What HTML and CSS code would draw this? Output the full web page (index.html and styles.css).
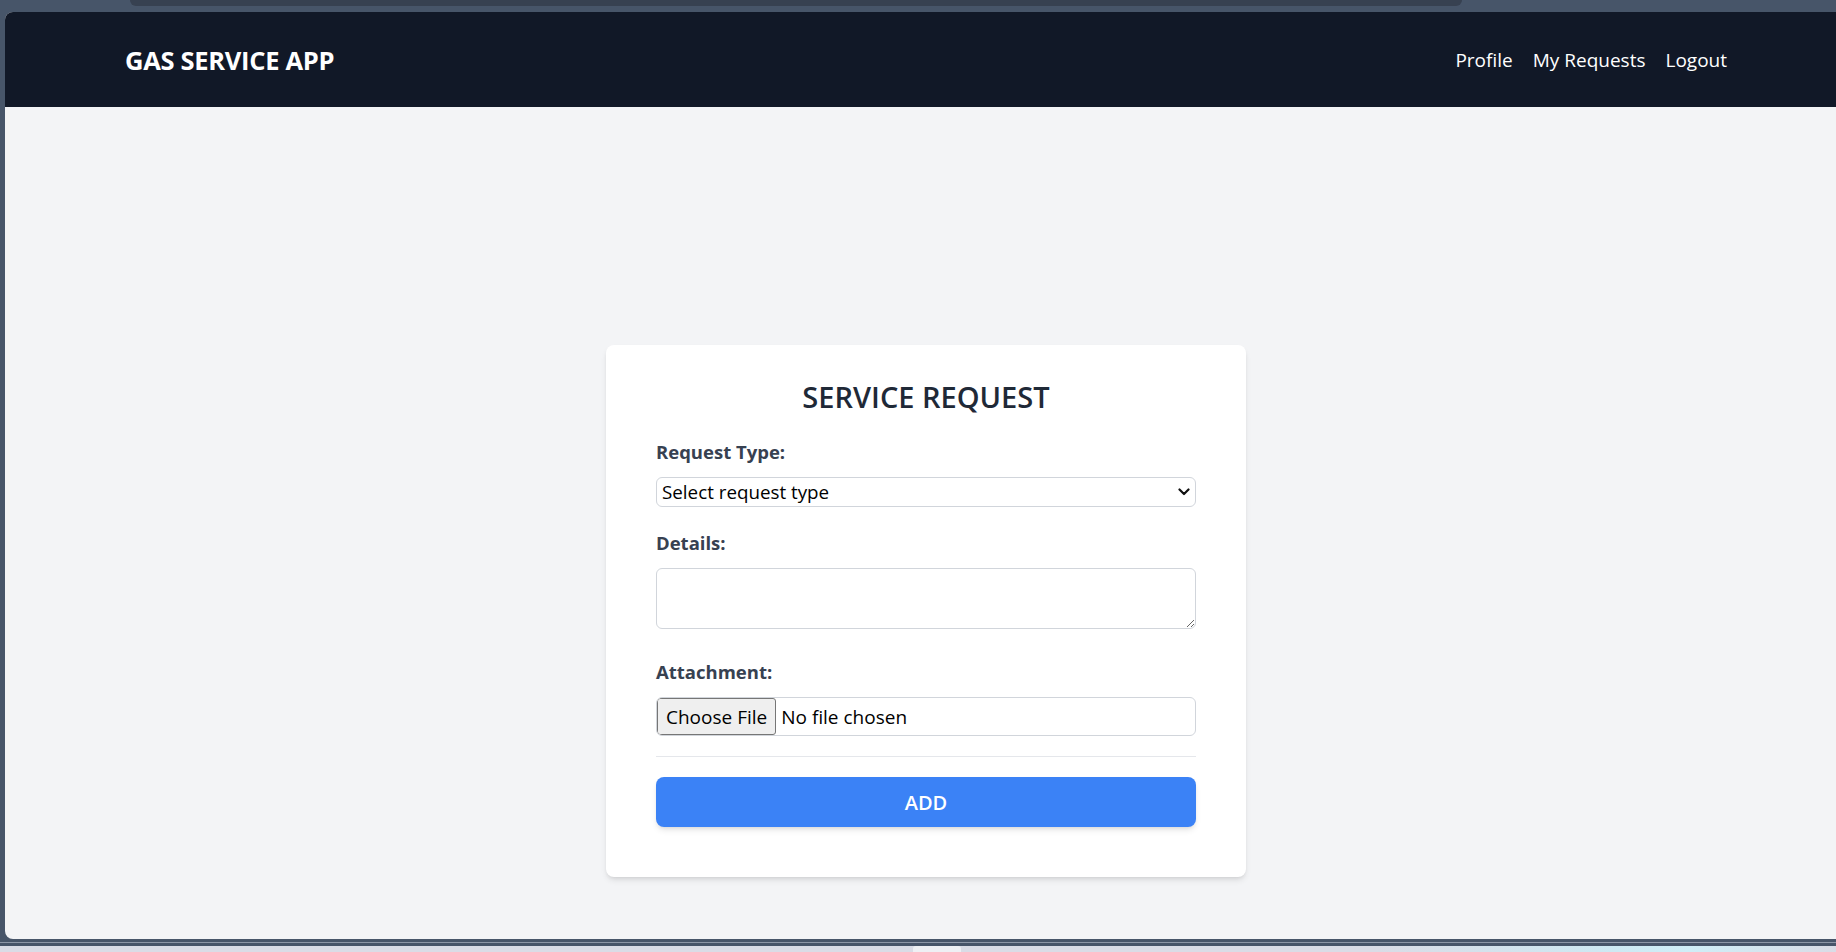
FILE: index.html
```html
<!DOCTYPE html>
<html lang="en">
<head>
<meta charset="utf-8">
<title>Gas Service App - Service Request</title>
<link rel="stylesheet" href="styles.css">
</head>
<body>
  <div class="topbar"><div class="tabstrip"></div></div>
  <div class="window">
    <nav class="nav">
      <a class="brand" href="#">GAS SERVICE APP</a>
      <div class="nav-links">
        <a href="#">Profile</a>
        <a href="#">My Requests</a>
        <a href="#">Logout</a>
      </div>
    </nav>
    <main class="main">
      <form class="card">
        <h1 class="card-title">SERVICE REQUEST</h1>
        <div class="field">
          <label class="label" for="type">Request Type:</label>
          <div class="select-wrap">
            <select id="type" class="select">
              <option>Select request type</option>
              <option>Installation</option>
              <option>Repair</option>
              <option>Leak Inspection</option>
            </select>
            <svg class="chevron" width="12" height="8" viewBox="0 0 12 8"><path d="M1.5 1.5 L6 6 L10.5 1.5" fill="none" stroke="#111" stroke-width="2.2" stroke-linecap="round" stroke-linejoin="round"/></svg>
          </div>
        </div>
        <div class="field">
          <label class="label" for="details">Details:</label>
          <textarea id="details" class="textarea"></textarea>
        </div>
        <div class="field field-attach">
          <label class="label" for="file">Attachment:</label>
          <input id="file" class="file" type="file">
        </div>
        <hr class="divider">
        <button class="btn" type="button">ADD</button>
      </form>
    </main>
  </div>
  <div class="bottom-edge"></div>
  <div class="desktop"><div class="dock-item"></div></div>
</body>
</html>
```
FILE: styles.css
```css
* { box-sizing: border-box; }
html, body { margin: 0; padding: 0; }
body {
  background: #475569;
  height: 952px;
  overflow: hidden;
  font-family: "Open Sans", "Noto Sans", "Liberation Sans", sans-serif;
}
.topbar { height: 12px; }
.tabstrip {
  margin-left: 130px;
  width: 1332px;
  height: 6px;
  background: #374151;
  border-radius: 0 0 12px 12px;
}
.window {
  margin-left: 5px;
  width: 1842px;
  height: 927px;
  border-radius: 8px 0 0 8px;
  overflow: hidden;
  background: #f3f4f6;
  display: flex;
  flex-direction: column;
}
.nav {
  height: 95px;
  flex: none;
  background: #111827;
  display: flex;
  align-items: center;
  justify-content: space-between;
  padding: 0 120px;
}
.brand {
  color: #fff;
  text-decoration: none;
  font-weight: 700;
  font-size: 25.5px;
  letter-spacing: -0.3px;
}
.nav-links { display: flex; gap: 20px; }
.nav-links a {
  color: #fff;
  text-decoration: none;
  font-size: 19px;
}
.main {
  flex: 1;
  display: flex;
  justify-content: center;
  align-items: flex-start;
  padding-top: 238px;
}
.card {
  width: 640px;
  background: #fff;
  border-radius: 8px;
  padding: 34px 50px 50px;
  box-shadow: 0 4px 6px -1px rgba(0,0,0,0.1), 0 2px 4px -2px rgba(0,0,0,0.1);
}
.card-title {
  margin: 0;
  text-align: center;
  font-size: 29px;
  line-height: 36px;
  font-weight: 600;
  color: #1f2937;
}
.field { margin-top: 24px; }
.field + .field { margin-top: 23px; }
.field-attach { margin-top: 30px !important; }
.label {
  display: block;
  font-size: 18.5px;
  line-height: 26px;
  font-weight: 700;
  color: #374151;
  margin-bottom: 12px;
}
.select-wrap { position: relative; }
.select {
  display: block;
  width: 100%;
  height: 30px;
  appearance: none;
  -webkit-appearance: none;
  background: #fff;
  border: 1px solid #d1d5db;
  border-radius: 6px;
  padding: 0 30px 0 5px;
  font-family: inherit;
  font-size: 18.8px;
  color: #000;
}
.chevron {
  position: absolute;
  right: 6px;
  top: 11px;
  pointer-events: none;
}
.textarea {
  display: block;
  width: 100%;
  height: 61px;
  border: 1px solid #d1d5db;
  border-radius: 6px;
  resize: vertical;
  font-family: inherit;
  font-size: 16px;
}
.file {
  display: block;
  width: 100%;
  height: 39px;
  border: 1px solid #d1d5db;
  border-radius: 6px;
  padding: 0;
  font-family: inherit;
  font-size: 19px;
  color: #000;
  background: #fff;
}
.file::file-selector-button {
  height: 37px;
  margin: 0 5px 0 0;
  padding: 0 8px;
  border: 1px solid #767676;
  border-radius: 3px;
  background: #efefef;
  font-family: inherit;
  font-size: 19px;
  color: #000;
}
.divider {
  margin: 20px 0 0;
  border: 0;
  border-top: 1px solid #e5e7eb;
}
.btn {
  display: block;
  width: 100%;
  height: 50px;
  margin-top: 20px;
  border: 0;
  border-radius: 8px;
  background: #3b82f6;
  color: #fff;
  font-family: inherit;
  font-size: 20px;
  font-weight: 600;
  box-shadow: 0 4px 6px -1px rgba(0,0,0,0.1), 0 2px 4px -2px rgba(0,0,0,0.1);
}
.bottom-edge { height: 4px; background: #475569; border-bottom: 1px solid #8c96a6; }
.desktop {
  height: 8px;
  background: linear-gradient(90deg, #d9dce6 0%, #d9dce6 75%, #cde9f3 88%, #cfeef7 92%, #d9dce6 100%);
}
.dock-item {
  margin-left: 913px;
  width: 48px;
  height: 8px;
  margin-top: 3px;
  background: #eef0f4;
  border-radius: 3px 3px 0 0;
}
```
